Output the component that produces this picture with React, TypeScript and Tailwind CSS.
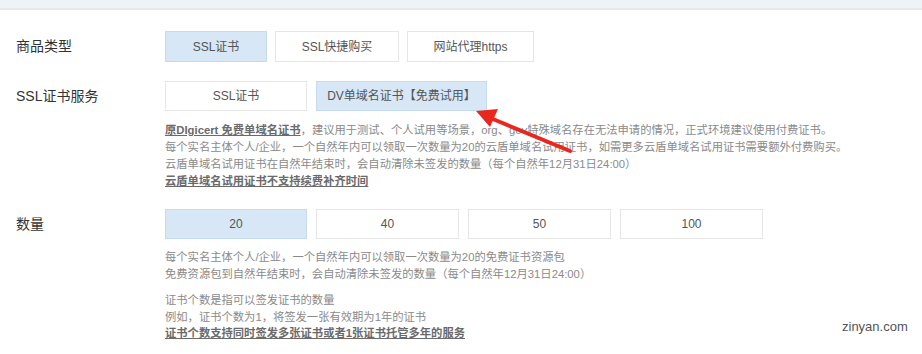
import React from 'react'

const font = { fontFamily: '"Liberation Sans", "Noto Sans CJK SC", sans-serif' }

// 选项按钮
const Opt: React.FC<{ label: string; w: string; active?: boolean; h?: string }> = ({ label, w, active, h = 'h-[31px]' }) => (
  <div
    className={`${w} ${h} flex items-center justify-center text-[12px] border ${
      active ? 'bg-[#d7e7f5] border-[#c6dbee] text-[#555]' : 'bg-white border-[#e6e6e6] text-[#555]'
    }`}
  >
    {label}
  </div>
)

export default function App() {
  return (
    <div className="w-[922px] h-[354px] bg-white relative overflow-hidden" style={font}>
      {/* 顶部条 */}
      <div className="h-[10px] bg-[#eef3f9] border-b-2 border-[#e9e7e5]" />

      {/* 商品类型 */}
      <div className="flex items-center mt-[21px]">
        <div className="w-[165px] pl-[16px] text-[14px] text-[#333]">商品类型</div>
        <div className="flex gap-[8px]">
          <Opt label="SSL证书" w="w-[102px]" active />
          <Opt label="SSL快捷购买" w="w-[124px]" />
          <Opt label="网站代理https" w="w-[127px]" />
        </div>
      </div>

      {/* SSL证书服务 */}
      <div className="flex items-center mt-[19px]">
        <div className="w-[165px] pl-[16px] text-[14px] text-[#333]">SSL证书服务</div>
        <div className="flex gap-[9px]">
          <Opt label="SSL证书" w="w-[142px]" h="h-[30px]" />
          <Opt label="DV单域名证书【免费试用】" w="w-[171px]" h="h-[30px]" active />
        </div>
      </div>

      <div className="pl-[165px] mt-[11px] text-[11.3px] leading-[17px] text-[#8a8a8a]">
        <p>
          <span className="underline font-bold text-[#6a6a6a]">原DIgicert 免费单域名证书</span>
          ，建议用于测试、个人试用等场景，org、gov特殊域名存在无法申请的情况，正式环境建议使用付费证书。
        </p>
        <p>每个实名主体个人/企业，一个自然年内可以领取一次数量为20的云盾单域名试用证书，如需更多云盾单域名试用证书需要额外付费购买。</p>
        <p>云盾单域名试用证书在自然年结束时，会自动清除未签发的数量（每个自然年12月31日24:00）</p>
        <p className="underline font-bold text-[#6a6a6a]">云盾单域名试用证书不支持续费补齐时间</p>
      </div>

      {/* 数量 */}
      <div className="flex items-center mt-[19px]">
        <div className="w-[165px] pl-[16px] text-[14px] text-[#333]">数量</div>
        <div className="flex gap-[9px]">
          <Opt label="20" w="w-[142px]" h="h-[30px]" active />
          <Opt label="40" w="w-[143px]" h="h-[30px]" />
          <Opt label="50" w="w-[143px]" h="h-[30px]" />
          <Opt label="100" w="w-[143px]" h="h-[30px]" />
        </div>
      </div>

      <div className="pl-[165px] mt-[10px] text-[11.3px] leading-[16.5px] text-[#8a8a8a]">
        <p>每个实名主体个人/企业，一个自然年内可以领取一次数量为20的免费证书资源包</p>
        <p>免费资源包到自然年结束时，会自动清除未签发的数量（每个自然年12月31日24:00）</p>
        <p className="mt-[10px]">证书个数是指可以签发证书的数量</p>
        <p>例如，证书个数为1，将签发一张有效期为1年的证书</p>
        <p className="underline font-bold text-[#6a6a6a]">证书个数支持同时签发多张证书或者1张证书托管多年的服务</p>
      </div>

      {/* 红色箭头 */}
      <svg className="absolute left-[470px] top-[104px]" width="110" height="52" viewBox="0 0 110 52">
        <line x1="18" y1="13" x2="100" y2="47" stroke="#e8281e" strokeWidth="4" strokeLinecap="round" />
        <polygon points="6,7 28,5 20,23" fill="#e8281e" />
      </svg>

      {/* 水印 */}
      <div className="absolute left-[842px] top-[317px] text-[13px] text-[#555]" style={{ fontFamily: '"Liberation Sans", sans-serif' }}>
        zinyan.com
      </div>
    </div>
  )
}
